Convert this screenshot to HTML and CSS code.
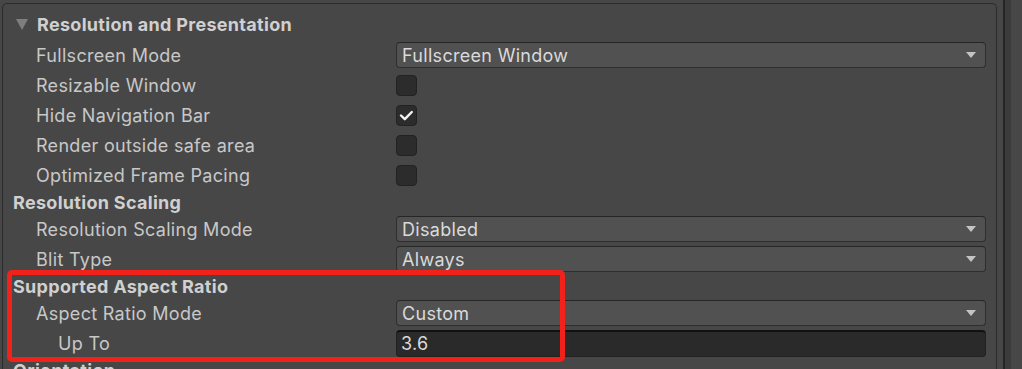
FILE: index.html
```html
<!DOCTYPE html>
<html lang="en">
<head>
    <meta charset="UTF-8">
    <meta name="viewport" content="width=device-width, initial-scale=1.0">
    <title>Player Settings</title>
    <link rel="stylesheet" href="styles.css">
</head>
<body>
    <div class="window">
        <div class="panel">
            <div class="foldout">
                <span class="fold-arrow"></span>
                <span>Resolution and Presentation</span>
            </div>

            <div class="row">
                <label class="label">Fullscreen Mode</label>
                <div class="dropdown"><span>Fullscreen Window</span><span class="arrow"></span></div>
            </div>
            <div class="row">
                <label class="label">Resizable Window</label>
                <span class="checkbox"></span>
            </div>
            <div class="row">
                <label class="label">Hide Navigation Bar</label>
                <span class="checkbox">
                    <svg width="21" height="21" viewBox="0 0 21 21"><path d="M5 10.5 L8.8 14.2 L15.8 7" fill="none" stroke="#f2f2f2" stroke-width="2.4" stroke-linecap="round" stroke-linejoin="round"/></svg>
                </span>
            </div>
            <div class="row">
                <label class="label">Render outside safe area</label>
                <span class="checkbox"></span>
            </div>
            <div class="row">
                <label class="label">Optimized Frame Pacing</label>
                <span class="checkbox"></span>
            </div>

            <div class="header">Resolution Scaling</div>
            <div class="row">
                <label class="label">Resolution Scaling Mode</label>
                <div class="dropdown"><span>Disabled</span><span class="arrow"></span></div>
            </div>
            <div class="row">
                <label class="label">Blit Type</label>
                <div class="dropdown"><span>Always</span><span class="arrow"></span></div>
            </div>

            <div class="header">Supported Aspect Ratio</div>
            <div class="row">
                <label class="label">Aspect Ratio Mode</label>
                <div class="dropdown"><span>Custom</span><span class="arrow"></span></div>
            </div>
            <div class="row">
                <label class="label sub">Up To</label>
                <div class="textfield">3.6</div>
            </div>

            <div class="header">Orientation</div>
        </div>
        <div class="scrollbar">
            <span class="scroll-edge"></span>
            <span class="scroll-track"></span>
        </div>
    </div>
    <div class="highlight"></div>
</body>
</html>
```

FILE: styles.css
```css
body {
    margin: 0;
    padding: 0;
    background-color: #474747;
    font-family: Inter, "Noto Sans", sans-serif;
    font-size: 18px;
    letter-spacing: 0.3px;
    color: #c8c8c8;
    height: 369px;
    overflow: hidden;
    position: relative;
}
.window {
    display: flex;
    height: 369px;
}
.panel {
    flex: 1;
    margin: 3px 0 0 2px;
    border: 1px solid #2c2c2c;
    border-bottom: none;
    border-radius: 5px 5px 0 0;
}
.foldout {
    display: flex;
    align-items: center;
    height: 36px;
    padding-top: 4px;
    box-sizing: border-box;
    font-weight: bold;
    color: #d0d0d0;
}
.fold-arrow {
    width: 0;
    height: 0;
    margin: 0 9px 0 13px;
    border-left: 6.5px solid transparent;
    border-right: 6.5px solid transparent;
    border-top: 11px solid #7e7e7e;
}
.row {
    display: flex;
    align-items: center;
    height: 30px;
    padding-right: 10px;
}
.label {
    width: 360px;
    padding-left: 33px;
    flex-shrink: 0;
    white-space: nowrap;
}
.label.sub {
    padding-left: 55px;
    width: 338px;
}
.header {
    display: flex;
    align-items: center;
    height: 24px;
    padding-left: 10px;
    font-weight: bold;
    color: #d0d0d0;
}
.dropdown {
    flex: 1;
    display: flex;
    align-items: center;
    justify-content: space-between;
    height: 26px;
    padding: 0 9px 0 5px;
    box-sizing: border-box;
    background-color: #515151;
    border: 1px solid #2e2e2e;
    border-top-color: #262626;
    border-radius: 4px;
    color: #dadada;
}
.arrow {
    width: 0;
    height: 0;
    border-left: 5.5px solid transparent;
    border-right: 5.5px solid transparent;
    border-top: 6px solid #c4c4c4;
}
.checkbox {
    width: 21px;
    height: 21px;
    box-sizing: border-box;
    background-color: #2c2c2c;
    border: 1px solid #222;
    border-radius: 4px;
}
.checkbox svg {
    display: block;
    margin: -1px;
}
.textfield {
    flex: 1;
    height: 27px;
    padding: 0 4px;
    box-sizing: border-box;
    display: flex;
    align-items: center;
    background-color: #2a2a2a;
    border: 1px solid #212121;
    border-top: 2px solid #111;
    border-radius: 4px;
    color: #dadada;
}
.scrollbar {
    width: 25px;
    box-sizing: border-box;
    display: flex;
    padding-left: 6px;
}
.scroll-edge {
    width: 2px;
    background-color: #252525;
}
.scroll-track {
    width: 6px;
    background-color: #3b3b3b;
}
.highlight {
    position: absolute;
    left: 7px;
    top: 270px;
    width: 558px;
    height: 92px;
    box-sizing: border-box;
    border: 5px solid #f2221a;
    border-radius: 5px;
}
```
